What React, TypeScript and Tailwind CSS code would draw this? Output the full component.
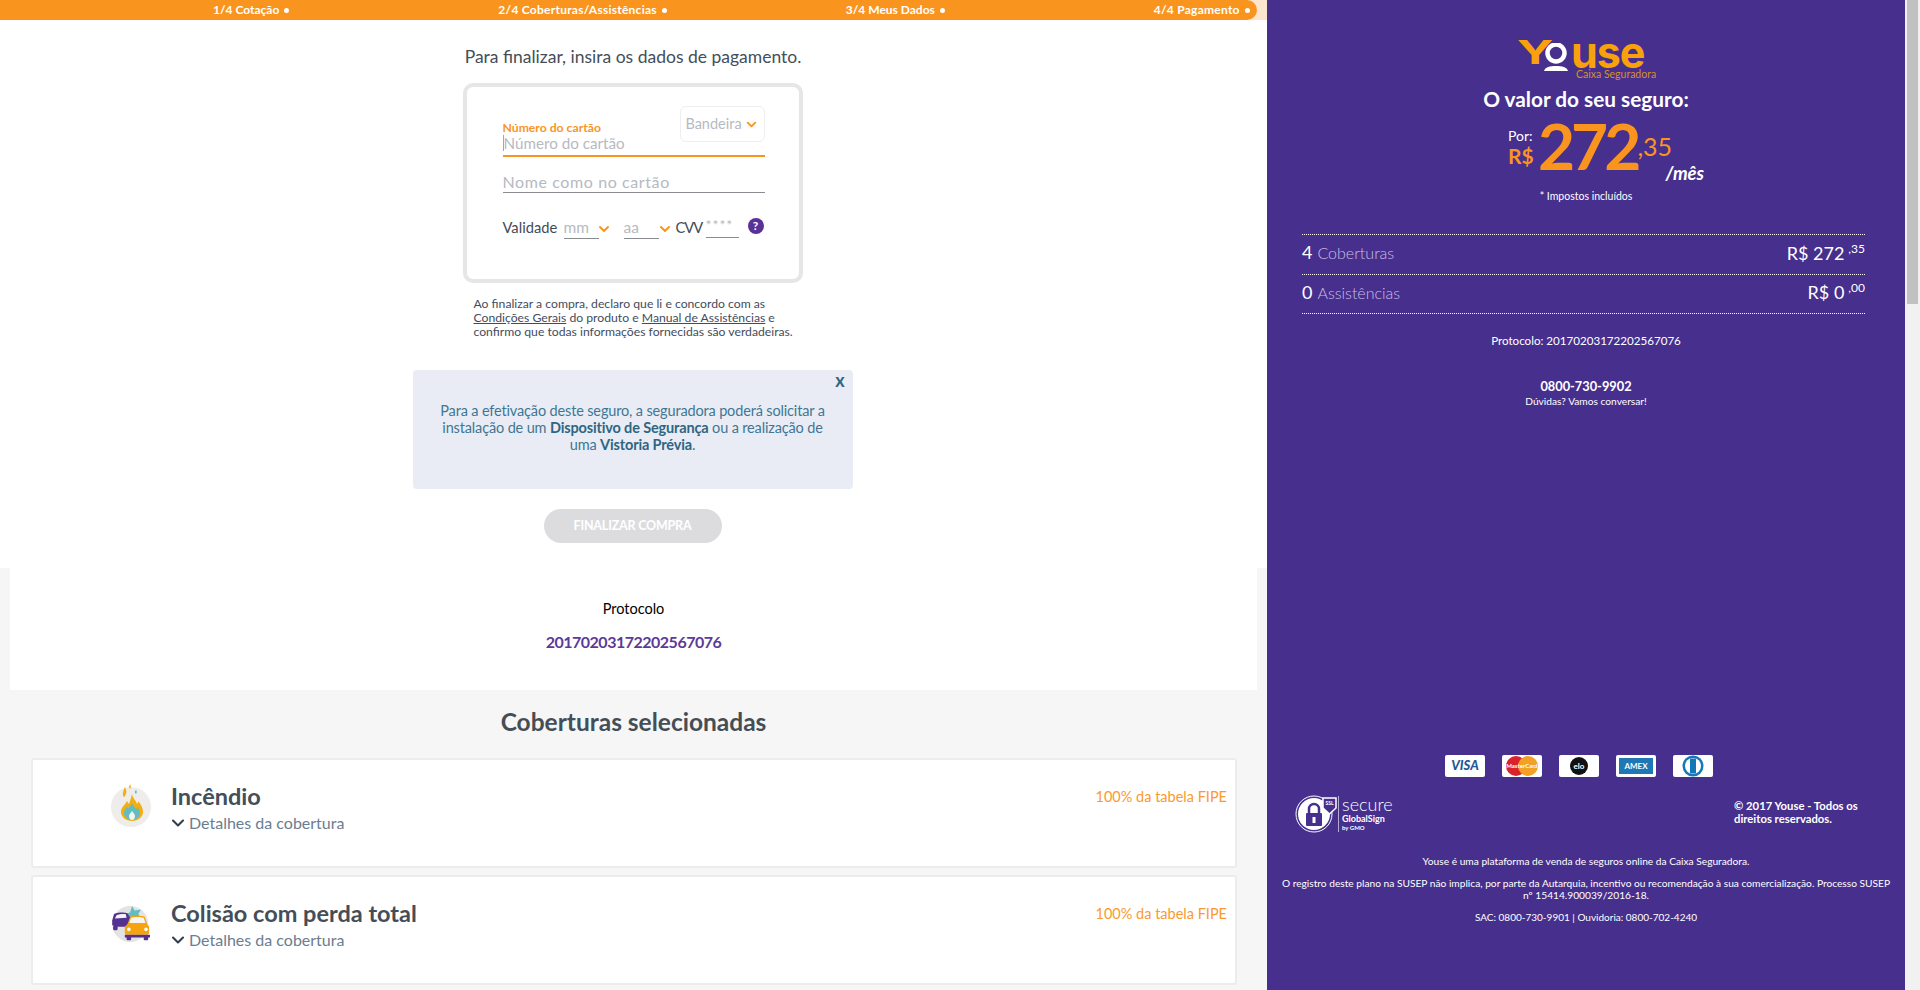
import type { JSX, ReactNode } from "react";
import { ChevronDown } from "lucide-react";

const steps = [
  { label: "1/4 Cotação", className: "ml-[213px]" },
  { label: "2/4 Coberturas/Assistências", className: "ml-[209px] tracking-[0.25px]" },
  { label: "3/4 Meus Dados", className: "ml-[179px]" },
  { label: "4/4 Pagamento", className: "ml-[209px] tracking-[0.25px]" },
];

const FlameIcon = () => (
  <svg width="40" height="43" viewBox="0 0 40 43">
    <circle cx="20" cy="23" r="20" fill="#eeedeb" />
    <path d="M21 10c1 5 4 6 5 10 1-1 1-2 1-3 3 3 5 7 5 11 0 5-5 9-11 9s-11-4-11-9c0-5 4-7 6-11 1 1 1 2 2 3 1-3 2-6 3-10z" fill="#f2ae12" />
    <path d="M21 19c1 3 3 4 4 6 1 0 1-1 1-2 2 2 3 4 3 6 0 4-4 7-8 7s-8-3-8-7c0-3 2-4 3-6 1 1 1 1 2 1 1-2 2-3 3-5z" fill="#63bcc2" />
    <path d="M21 27c1 2 3 3 3 5s-1 4-3 4-3-2-3-4 2-3 3-5z" fill="#f4f4f2" />
    <path d="M14 3c1 3 2 4 1 7-1 1-1 3-2 3-2-2-1-6 1-10z" fill="#f2ae12" />
    <path d="M19 0l1 3-1 2-1-2z" fill="#f2ae12" />
    <path d="M25 6c1 1 1 3 0 4-1-1-2-2 0-4z" fill="#63bcc2" />
  </svg>
);

const CrashIcon = () => (
  <svg width="42" height="36" viewBox="0 0 46 40">
    <circle cx="21" cy="20" r="20" fill="#e4e3e3" />
    <path d="M18 8l3-1 2-7 3 5 7-1-3 5 2 3-12 2z" fill="#63bcc2" />
    <path d="M1 16l2-7c5-2 11-2 15-1l3 5v8l-5 2H4l-3-2z" fill="#54308f" />
    <path d="M4 14l2-4c3-1 7-1 10-1l1 4z" fill="#f4f2f7" />
    <rect x="2" y="22" width="5" height="5" rx="1.500" fill="#54308f" />
    <path d="M18 20l3-8c1-1 3-1 8-1s7 0 8 1l3 8 2 3v7l-1 2H16l-1-2v-7z" fill="#f5a30f" />
    <path d="M20 19l2-6c3-1 11-1 14 0l2 6z" fill="#f7f5f0" />
    <circle cx="19.500" cy="26" r="2" fill="#fff" />
    <circle cx="38.500" cy="26" r="2" fill="#fff" />
    <rect x="15" y="32" width="28" height="3" fill="#54308f" />
    <rect x="17" y="34" width="5" height="4" rx="1" fill="#54308f" />
    <rect x="36" y="34" width="5" height="4" rx="1" fill="#54308f" />
  </svg>
);

const CoverageCard = ({ icon, title, iconClass }: { icon: JSX.Element; title: string; iconClass: string }) => (
  <div className="flex h-[110px] shrink-0 justify-between rounded-[3px] border-2 border-[#ececec] bg-white pr-[8px]">
    <div className="flex pl-[78px]">
      <div className={`w-[60px] ${iconClass}`}>{icon}</div>
      <div className="pt-[21px]">
        <h3 className="text-[23.5px] leading-[30px] font-bold text-[#444e59]">{title}</h3>
        <div className="mt-[2px] flex items-center gap-[1px] text-[16px] leading-[20px] text-[#6a7d91]">
          <ChevronDown size={20} strokeWidth={2.5} className="ml-[-3px] text-[#2f3e4e]" />
          Detalhes da cobertura
        </div>
      </div>
    </div>
    <span className="pt-[27px] text-[14.5px] leading-[20px] text-[#fa9a2e]">100% da tabela FIPE</span>
  </div>
);

const Brand = ({ children }: { children: ReactNode }) => (
  <div className="flex h-[22px] w-[40px] items-center justify-center overflow-hidden rounded-[2px] bg-white">{children}</div>
);

const SummaryRow = ({ count, label, value, cents }: { count: string; label: string; value: string; cents: string }) => (
  <div className="flex h-[39.5px] items-center justify-between border-b border-dotted border-white pb-[3px]">
    <div className="flex items-baseline gap-[5px]">
      <span className="text-[18px] text-white">{count}</span>
      <span className="text-[16px] font-light text-[#c9bfe3]">{label}</span>
    </div>
    <div className="flex items-start text-white">
      <span className="text-[18px] leading-[24px]">R$ {value}</span>
      <span className="ml-[4px] text-[12px] leading-[16px]">,{cents}</span>
    </div>
  </div>
);

export default function App() {
  return (
    <div className="flex h-[990px] overflow-hidden bg-[#f1f1f1] font-['Lato','Noto_Sans',sans-serif]">
      <div className="w-[1267px] shrink-0 overflow-hidden bg-[#f6f6f6]">
        <div className="h-5 bg-[#fde6d0]">
          <div className="flex h-5 w-[1257px] items-center rounded-r-full bg-[#f9951f] text-[12px] font-bold text-white">
            {steps.map((step) => (
              <span key={step.label} className={`flex items-center ${step.className}`}>
                {step.label}
                <span className="ml-[5px] h-[5px] w-[5px] rounded-full bg-white" />
              </span>
            ))}
          </div>
        </div>

        <div className="flex h-[548px] flex-col items-center bg-white pr-[2px]">
          <p className="mt-[25px] ml-[1px] text-[17.5px] leading-6 text-[#444e59]">Para finalizar, insira os dados de pagamento.</p>

          <div className="mt-[14px] h-[200px] w-[340px] rounded-[10px] border-4 border-[#e6e6e9] pt-[19px] pr-[34px] pl-[36px]">
            <div className="flex h-[51px] justify-between border-b-2 border-[#f9951f]">
              <div className="pt-[14px]">
                <div className="text-[12.2px] leading-[15px] font-bold text-[#f9951f]">Número do cartão</div>
                <div className="border-l border-[#f9951f] text-[15.2px] leading-[16px] text-[#b7b9c2]">Número do cartão</div>
              </div>
              <div className="flex h-[36px] w-[85px] items-center justify-center gap-[2px] rounded-md border border-[#eeeeee] text-[14.5px] text-[#b7b9c2]">
                Bandeira
                <ChevronDown size={15} strokeWidth={3} className="text-[#f9951f]" />
              </div>
            </div>
            <div className="flex h-[36px] items-end border-b border-[#888b90] text-[16px] leading-[20px] tracking-[0.6px] text-[#b7b9c2]">
              Nome como no cartão
            </div>
            <div className="mt-[22px] flex h-[25px] items-start text-[14.7px] leading-[24px] text-[#3f4b5c]">
              <span className="w-[61px]">Validade</span>
              <span className="h-[24px] w-[35px] border-b border-[#888b90] text-[15.5px] leading-[24px] text-[#b7b9c2]">mm</span>
              <ChevronDown size={16} strokeWidth={3} className="mt-[6px] mr-[12px] ml-[-3px] shrink-0 text-[#f9951f]" />
              <span className="h-[24px] w-[35px] border-b border-[#888b90] text-[15.5px] leading-[24px] text-[#b7b9c2]">aa</span>
              <ChevronDown size={16} strokeWidth={3} className="mt-[6px] mr-[3px] ml-[-2px] shrink-0 text-[#f9951f]" />
              <span className="w-[30px] tracking-[-1px]">CVV</span>
              <span className="h-[23px] w-[33px] border-b border-[#888b90] text-[14px] leading-[20px] tracking-[1px] text-[#b7b9c2]">****</span>
              <span className="mt-[3px] ml-[9px] flex h-[16px] w-[16px] items-center justify-center rounded-full bg-[#5a3194] text-[12px] font-bold text-white">?</span>
            </div>
          </div>

          <p className="mt-[14px] ml-[2px] w-[326px] pl-[3px] text-[12.2px] leading-[14px] text-[#444c5c]">
            Ao finalizar a compra, declaro que li e concordo com as <u>Condições Gerais</u> do produto e <u>Manual de Assistências</u> e confirmo que todas informações fornecidas são verdadeiras.
          </p>

          <div className="relative mt-[31px] h-[119px] w-[440px] rounded-[4px] bg-[#e9ecf5] px-[24px] pt-[32px] text-center text-[14.5px] leading-[17px] tracking-[-0.15px] text-[#3f7793]">
            <span className="absolute top-[2px] right-[8px] text-[18px] font-bold text-[#2e6682]">x</span>
            Para a efetivação deste seguro, a seguradora poderá solicitar a instalação de um <b className="text-[#2e6682]">Dispositivo de Segurança</b> ou a realização de uma <b className="text-[#2e6682]">Vistoria Prévia</b>.
          </div>

          <button className="mt-[20px] h-[34px] w-[178px] rounded-full bg-[#dcdcdf] text-[12.5px] font-bold tracking-[-0.2px] text-white uppercase">Finalizar compra</button>
        </div>

        <div className="mx-[10px] flex h-[122px] flex-col items-center bg-white pt-[30px]">
          <span className="text-[14.5px] leading-[22px] text-black">Protocolo</span>
          <span className="mt-[10px] text-[16px] leading-[24px] font-bold tracking-[-0.5px] text-[#5b3a98]">20170203172202567076</span>
        </div>

        <h2 className="mt-[16px] text-center text-[24.5px] leading-[32px] font-bold text-[#444e56]">Coberturas selecionadas</h2>

        <div className="mt-[20px] mr-[30px] ml-[31px] flex flex-col gap-[7px]">
          <CoverageCard icon={<FlameIcon />} iconClass="pt-[24px]" title="Incêndio" />
          <CoverageCard icon={<CrashIcon />} iconClass="pt-[29px]" title="Colisão com perda total" />
        </div>
      </div>

      <aside className="flex h-[990px] w-[638px] shrink-0 flex-col items-center bg-[#472f8e] text-white">
        <div className="mt-[36px] mr-[8px] flex w-[130px] flex-col">
          <div className="flex h-[32px] items-center font-['Inter',sans-serif] font-bold text-[#f9a10c]">
            <span className="w-[26px] origin-left scale-x-[1.5] text-[33px] leading-[32px]">Y</span>
            <svg width="26" height="30" viewBox="0 0 26 30" className="mt-[12px] shrink-0">
              <circle cx="13" cy="10" r="8.500" fill="none" stroke="#fff" strokeWidth="4.500" />
              <path d="M1 28c1-4 6-5 12-5s11 1 12 5z" fill="#fff" />
            </svg>
            <span className="ml-[2px] text-[43px] leading-[32px] tracking-[-1px]">use</span>
          </div>
          <span className="ml-[59px] text-[10.5px] leading-[12px] whitespace-nowrap text-[#d39221]">Caixa Seguradora</span>
        </div>
        <h1 className="mt-[6px] text-[20.8px] leading-[26px] font-bold">O valor do seu seguro:</h1>

        <div className="ml-[42px] flex h-[72px] w-[198px] items-start">
          <div className="w-[30px] pt-[16px]">
            <div className="text-[14px] leading-[16px]">Por:</div>
            <div className="text-[21px] leading-[24px] font-bold text-[#f9951f]">R$</div>
          </div>
          <span className="text-[64px] leading-[68px] font-bold tracking-[-4px] text-[#f9951f]">272</span>
          <div className="pt-[20px]">
            <div className="text-[25px] leading-[28px] text-[#f9951f]">,35</div>
            <div className="mt-[3px] ml-[28px] text-[18.5px] leading-[20px] font-bold whitespace-nowrap italic">/mês</div>
          </div>
        </div>
        <p className="mt-[5px] text-[10.5px] leading-[14px]">* Impostos incluídos</p>

        <div className="mt-[31px] mr-[5px] w-[563px] border-t border-dotted border-white">
          <SummaryRow count="4" label="Coberturas" value="272" cents="35" />
          <SummaryRow count="0" label="Assistências" value="0" cents="00" />
        </div>

        <p className="mt-[19px] text-[11.6px] leading-[16px]">Protocolo: 20170203172202567076</p>
        <p className="mt-[29px] text-[12.8px] leading-[16px] font-bold">0800-730-9902</p>
        <p className="text-[10.2px] leading-[14px]">Dúvidas? Vamos conversar!</p>

        <div className="mt-[347px] mr-[14px] flex gap-[17px]">
          <Brand>
            <span className="text-[13px] font-black text-[#1f5a96] italic">VISA</span>
          </Brand>
          <Brand>
            <svg width="40" height="22" viewBox="0 0 40 22">
              <circle cx="14" cy="11" r="10" fill="#d9222a" />
              <circle cx="26" cy="11" r="10" fill="#f4a024" />
              <text x="20" y="13" textAnchor="middle" fontSize="6" fill="#fff" fontWeight="700">MasterCard</text>
            </svg>
          </Brand>
          <Brand>
            <span className="flex h-[18px] w-[18px] items-center justify-center rounded-full bg-[#111] text-[8px] font-bold text-white">elo</span>
          </Brand>
          <Brand>
            <span className="flex h-[16px] w-[34px] items-center justify-center bg-[#1f78b4] text-[8px] font-bold text-white">AMEX</span>
          </Brand>
          <Brand>
            <svg width="40" height="22" viewBox="0 0 40 22">
              <circle cx="20" cy="11" r="10.500" fill="#1478b8" />
              <circle cx="20" cy="11" r="8" fill="#fff" />
              <rect x="17" y="3.500" width="6" height="15" fill="#1478b8" />
            </svg>
          </Brand>
        </div>

        <div className="mt-[18px] flex w-full items-start pl-[28px]">
          <div className="flex h-[38px] w-[300px] items-center">
            <svg width="43" height="38" viewBox="0 0 43 38" className="shrink-0">
              <circle cx="19" cy="19" r="18" fill="none" stroke="#fff" strokeWidth="1" />
              <circle cx="19" cy="19" r="16" fill="#fff" />
              <path d="M28 3h13v10l-6.500 6-6.500-6z" fill="#472f8e" stroke="#fff" strokeWidth="1.500" />
              <text x="34.500" y="10" textAnchor="middle" fontSize="5" fill="#fff" fontWeight="700">SSL</text>
              <rect x="11" y="18" width="16" height="13" rx="1" fill="#472f8e" />
              <path d="M14 18v-4a5 5 0 0 1 10 0v4" fill="none" stroke="#472f8e" strokeWidth="2.500" />
              <rect x="17.500" y="22" width="3" height="6" fill="#fff" />
            </svg>
            <div className="flex h-[36px] flex-col justify-center border-l border-white/60 pl-[3px]">
              <div className="text-[18px] leading-[17px] font-light">secure</div>
              <div className="text-[9px] leading-[11px] font-bold">GlobalSign</div>
              <div className="text-[6px] leading-[8px] font-bold">by GMO</div>
            </div>
          </div>
          <p className="ml-[139px] w-[150px] pt-[4px] text-[11.3px] leading-[13px] font-bold">© 2017 Youse - Todos os direitos reservados.</p>
        </div>

        <p className="mt-[21px] text-[10.2px] leading-[14px]">Youse é uma plataforma de venda de seguros online da Caixa Seguradora.</p>
        <p className="mt-[9px] w-[620px] text-center text-[10.2px] leading-[12px]">
          O registro deste plano na SUSEP não implica, por parte da Autarquia, incentivo ou recomendação à sua comercialização. Processo SUSEP nº 15414.900039/2016-18.
        </p>
        <p className="mt-[9px] text-[10px] leading-[14px]">SAC: 0800-730-9901 | Ouvidoria: 0800-702-4240</p>
      </aside>

      <div className="h-[990px] w-[15px] shrink-0 bg-[#f1f1f1] px-[2px]">
        <div className="h-[304px] w-full bg-[#c1c1c1]" />
      </div>
    </div>
  );
}
